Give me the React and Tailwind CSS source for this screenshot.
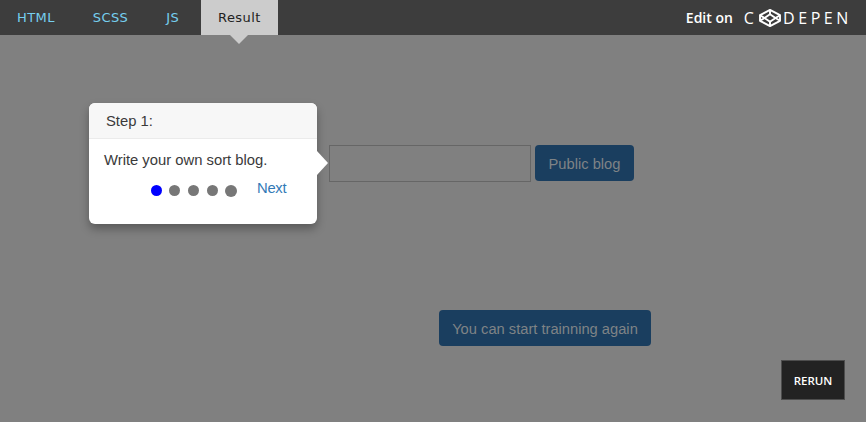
const tabs = ["HTML", "SCSS", "JS"];
const sans = "font-['Liberation_Sans',Arial,sans-serif]";

function CubeIcon() {
  return (
    <svg width="22" height="18" viewBox="0 0 22 18" fill="none" stroke="white" strokeWidth="1.9" strokeLinejoin="round">
      <path d="M11 .9 21 6.2V11.8L11 17.1 1 11.8V6.2Z" />
      <path d="M11 5.2 16.5 9 11 12.8 5.5 9Z" />
      <path d="M11 .9V5.2M11 12.8V17.1M1 6.2 5.5 9 1 11.8M21 6.2 16.5 9 21 11.8" />
    </svg>
  );
}

export default function App() {
  return (
    <div className="w-[866px] h-[422px] overflow-hidden flex flex-col bg-[#808080] font-['DejaVu_Sans',sans-serif]">
      <header className="h-[35px] shrink-0 bg-[#3d3d3d] flex items-stretch justify-between">
        <nav className="flex items-stretch pl-[17px]">
          <div className="flex items-center gap-[38px] text-[13px] text-[#76cfef] tracking-[0.4px]">
            {tabs.map((t) => (
              <a key={t}>{t}</a>
            ))}
          </div>
          <div className="relative flex items-center px-[17px] ml-[22px] bg-[#cccccc] text-[13px] text-[#222222] tracking-[0.4px]">
            Result
            <span className="absolute left-1/2 -translate-x-1/2 top-full w-0 h-0 border-x-[9px] border-x-transparent border-t-[9px] border-t-[#cccccc]" />
          </div>
        </nav>
        <div className="flex items-center text-white pr-[17px] font-['Open_Sans',sans-serif]">
          <span className="text-[14px] font-semibold mr-[11px]">Edit on</span>
          <span className="flex items-center text-[16px]">
            C<span className="ml-[5px]"><CubeIcon /></span>
            <span className="ml-[2px] tracking-[3.6px] -mr-[3px]">DEPEN</span>
          </span>
        </div>
      </header>

      <main className={`relative flex-1 ${sans}`}>
        <div className="flex items-start pt-[110px] pl-[329px] gap-[4px]">
          <input className="w-[202px] h-[37px] border border-[#666666] bg-transparent" />
          <button className="h-[36px] w-[99px] pt-[2px] rounded-[4px] bg-[#1a3e5f] text-[#7f8386] text-[14.7px]">Public blog</button>
        </div>
        <div className="flex pt-[128px] pl-[439px]">
          <button className="h-[36px] w-[212px] pt-[2px] rounded-[4px] bg-[#1a3e5f] text-[#7f8386] text-[14.7px]">You can start trainning again</button>
        </div>

        <div className="absolute left-[89px] top-[68px] w-[228px] h-[121px] bg-white rounded-[6px] shadow-[0_5px_10px_rgba(0,0,0,0.3)] text-[14.8px] text-[#3a3a3a]">
          <div className="h-[36px] px-[17px] pt-[1px] flex items-center bg-[#f7f7f7] border-b border-[#ebebeb] rounded-t-[6px]">Step 1:</div>
          <div className="px-[15px] pt-[11px]">
            <p className="leading-[20px]">Write your own sort blog.</p>
            <div className="flex items-center mt-[12px] pl-[47px]">
              <span className="w-[11px] h-[11px] rounded-full bg-[#0000ff]" />
              <span className="w-[11px] h-[11px] rounded-full bg-[#777777] ml-[7px]" />
              <span className="w-[11px] h-[11px] rounded-full bg-[#777777] ml-[8px]" />
              <span className="w-[11px] h-[11px] rounded-full bg-[#777777] ml-[8px]" />
              <span className="w-[12px] h-[12px] rounded-full bg-[#777777] ml-[7px]" />
              <a className="text-[#337ab7] ml-[20px] -mt-[5px] tracking-[-0.3px]">Next</a>
            </div>
          </div>
          <span className="absolute left-full top-[48px] w-0 h-0 border-y-[12px] border-y-transparent border-l-[11px] border-l-white" />
        </div>

        <button className="absolute left-[781px] top-[325px] w-[64px] h-[40px] pt-[1px] bg-[#222222] border border-[#4d4d4d] text-white text-[11.5px] font-semibold font-['Open_Sans',sans-serif]">RERUN</button>
      </main>
    </div>
  );
}
